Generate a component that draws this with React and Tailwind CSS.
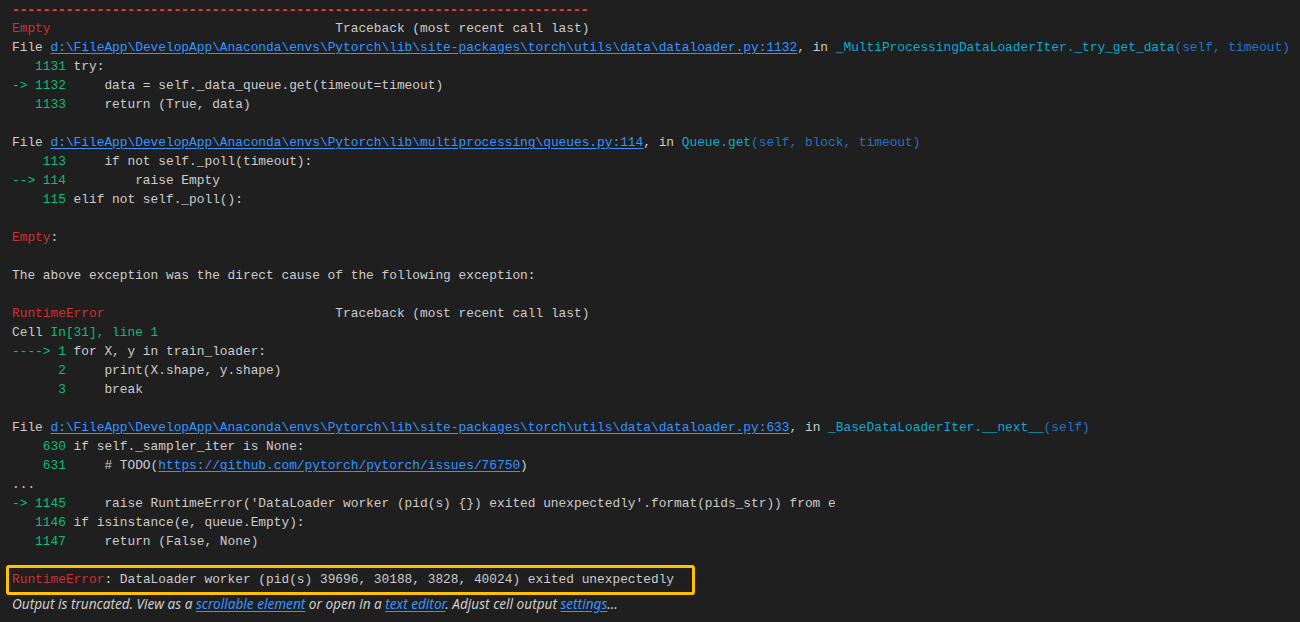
const num = "text-[#0dbc79]";

function Link({ children }) {
  return <span className="text-[#3794ff] underline underline-offset-2">{children}</span>;
}

function FileLine({ path, fn, args }) {
  return (
    <div>
      {"File "}
      <Link>{path}</Link>
      {", in "}
      <span className="text-[#11a8cd]">{fn}</span>
      <span className="text-[#2472c8]">{args}</span>
    </div>
  );
}

function Code({ mark, code }) {
  return (
    <div>
      <span className={num}>{mark}</span>
      {code}
    </div>
  );
}

const Blank = () => <div>{" "}</div>;

export default function App() {
  return (
    <div className="min-h-screen bg-[#1f1f1f] text-[#cccccc]">
      <div
        className="px-3 text-[12.83px] leading-[19px] whitespace-pre"
        style={{ fontFamily: '"Liberation Mono", "DejaVu Sans Mono", monospace' }}
      >
        <div
          className="text-[12.78px] font-bold text-[#e83c3c]"
          style={{ fontFamily: '"DejaVu Sans Mono", monospace' }}
        >
          {"-".repeat(75)}
        </div>
        <div>
          <span className="text-[#cd3131]">Empty</span>
          {" ".repeat(37) + "Traceback (most recent call last)"}
        </div>
        <FileLine
          path="d:\FileApp\DevelopApp\Anaconda\envs\Pytorch\lib\site-packages\torch\utils\data\dataloader.py:1132"
          fn="_MultiProcessingDataLoaderIter._try_get_data"
          args="(self, timeout)"
        />
        <Code mark="   1131" code=" try:" />
        <Code mark="-> 1132" code="     data = self._data_queue.get(timeout=timeout)" />
        <Code mark="   1133" code="     return (True, data)" />
        <Blank />
        <FileLine
          path="d:\FileApp\DevelopApp\Anaconda\envs\Pytorch\lib\multiprocessing\queues.py:114"
          fn="Queue.get"
          args="(self, block, timeout)"
        />
        <Code mark="    113" code="     if not self._poll(timeout):" />
        <Code mark="--> 114" code="         raise Empty" />
        <Code mark="    115" code=" elif not self._poll():" />
        <Blank />
        <div>
          <span className="text-[#cd3131]">Empty</span>:
        </div>
        <Blank />
        <div>The above exception was the direct cause of the following exception:</div>
        <Blank />
        <div>
          <span className="text-[#cd3131]">RuntimeError</span>
          {" ".repeat(30) + "Traceback (most recent call last)"}
        </div>
        <div>
          {"Cell "}
          <span className={num}>In[31], line 1</span>
        </div>
        <Code mark="----> 1" code=" for X, y in train_loader:" />
        <Code mark="      2" code="     print(X.shape, y.shape)" />
        <Code mark="      3" code="     break" />
        <Blank />
        <FileLine
          path="d:\FileApp\DevelopApp\Anaconda\envs\Pytorch\lib\site-packages\torch\utils\data\dataloader.py:633"
          fn="_BaseDataLoaderIter.__next__"
          args="(self)"
        />
        <Code mark="    630" code=" if self._sampler_iter is None:" />
        <div>
          <span className={num}>    631</span>
          {"     # TODO("}
          <Link>https://github.com/pytorch/pytorch/issues/76750</Link>)
        </div>
        <div>...</div>
        <Code
          mark="-> 1145"
          code="     raise RuntimeError('DataLoader worker (pid(s) {}) exited unexpectedly'.format(pids_str)) from e"
        />
        <Code mark="   1146" code=" if isinstance(e, queue.Empty):" />
        <Code mark="   1147" code="     return (False, None)" />
        <div className="h-[13.5px]" />
        <div className="-ml-[6px] w-[689px] rounded-[3px] border-[3px] border-[#ffc000] px-[3px] py-[2.5px]">
          <span className="text-[#cd3131]">RuntimeError</span>
          {": DataLoader worker (pid(s) 39696, 30188, 3828, 40024) exited unexpectedly"}
        </div>
      </div>
      <div
        className="px-3 text-[13.6px] leading-[18px] italic"
        style={{ fontFamily: '"Noto Sans", "Open Sans", sans-serif' }}
      >
        {"Output is truncated. View as a "}
        <Link>scrollable element</Link>
        {" or open in a "}
        <Link>text editor</Link>
        {". Adjust cell output "}
        <Link>settings</Link>
        {"..."}
      </div>
    </div>
  );
}
